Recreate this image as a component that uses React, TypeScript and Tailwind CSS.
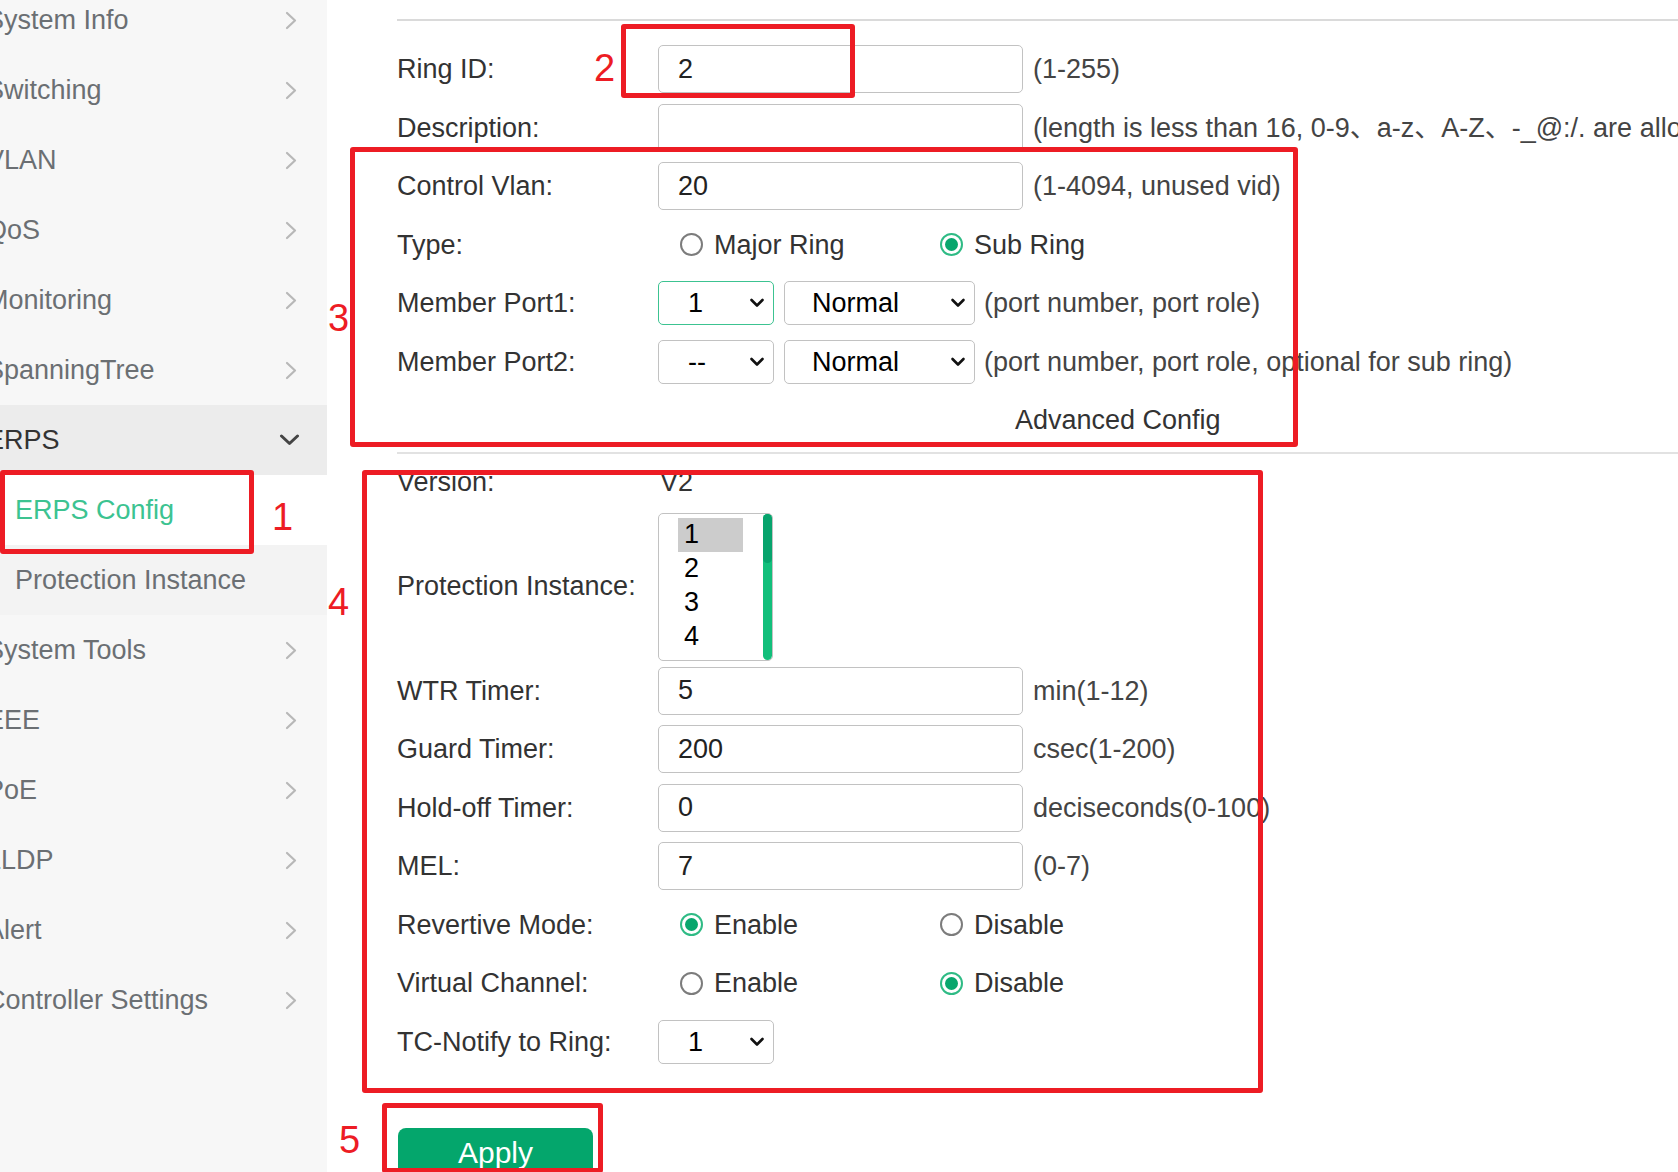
import type { ReactNode } from 'react';

const menu = [
  { label: 'System Info' },
  { label: 'Switching' },
  { label: 'VLAN' },
  { label: 'QoS' },
  { label: 'Monitoring' },
  { label: 'SpanningTree' },
  { label: 'ERPS', open: true },
  { label: 'ERPS Config', sub: true, active: true },
  { label: 'Protection Instance', sub: true },
  { label: 'System Tools' },
  { label: 'EEE' },
  { label: 'PoE' },
  { label: 'LLDP' },
  { label: 'Alert' },
  { label: 'Controller Settings' },
];

function ChevronRight() {
  return (
    <svg width="12" height="19" viewBox="0 0 12 19" fill="none">
      <path d="M2 2 L10 9.5 L2 17" stroke="#b8b8b8" strokeWidth="2.2" strokeLinecap="round" strokeLinejoin="round" />
    </svg>
  );
}

function ChevronDown({ small }: { small?: boolean }) {
  if (small) {
    return (
      <svg width="16" height="10" viewBox="0 0 16 10" fill="none">
        <path d="M2.5 2 L8 7.5 L13.5 2" stroke="#111" strokeWidth="2.6" strokeLinecap="round" strokeLinejoin="round" />
      </svg>
    );
  }
  return (
    <svg width="21" height="12" viewBox="0 0 21 12" fill="none">
      <path d="M2.5 2 L10.5 9.5 L18.5 2" stroke="#444" strokeWidth="3" strokeLinecap="round" strokeLinejoin="round" />
    </svg>
  );
}

function Sidebar() {
  return (
    <aside className="w-[327px] shrink-0 h-full bg-[#f7f7f7] overflow-hidden">
      <ul className="-mt-[15px]">
        {menu.map((item) => {
          let rowBg = '';
          if (item.open) rowBg = 'bg-[#ececec]';
          if (item.active) rowBg = 'bg-white';
          if (item.sub && !item.active) rowBg = 'bg-[#f3f3f3]';
          let color = 'text-[#6b6f73]';
          if (item.open) color = 'text-[#333]';
          if (item.active) color = 'text-[#3cc391]';
          return (
            <li key={item.label} className={`h-[70px] flex items-center justify-between whitespace-nowrap ${rowBg}`}>
              <span className={`${item.sub ? 'ml-[15px]' : '-ml-[14px]'} ${color}`}>{item.label}</span>
              {!item.sub && (
                <span className={item.open ? 'mr-[27px] flex' : 'mr-[30px] flex'}>
                  {item.open ? <ChevronDown /> : <ChevronRight />}
                </span>
              )}
            </li>
          );
        })}
      </ul>
    </aside>
  );
}

function Row({ label, children, tall }: { label: string; children?: ReactNode; tall?: boolean }) {
  return (
    <div className={`flex items-center whitespace-nowrap ${tall ? 'h-[150px]' : 'h-[58.5px]'}`}>
      <div className="w-[261px] shrink-0 text-[#333]">{label}</div>
      {children}
    </div>
  );
}

function TextBox({ value, hint }: { value: string; hint?: string }) {
  return (
    <>
      <input
        readOnly
        value={value}
        className="w-[365px] h-[48px] shrink-0 border-[1.5px] border-[#c2c2c2] rounded-[5px] pl-[19px] text-[#222] bg-white outline-none"
      />
      {hint && <span className="ml-[10px] text-[#444]">{hint}</span>}
    </>
  );
}

function Select({ value, width, focus }: { value: string; width: 'narrow' | 'wide'; focus?: boolean }) {
  return (
    <div
      className={`h-[44px] shrink-0 flex items-center justify-between border-[1.5px] rounded-[5px] pr-[8px] text-black ${
        width === 'narrow' ? 'w-[116px] pl-[29px]' : 'w-[191px] pl-[27px]'
      } ${focus ? 'border-[#3cc391]' : 'border-[#c2c2c2]'}`}
    >
      <span>{value}</span>
      <ChevronDown small />
    </div>
  );
}

function Radio({ label, checked, first }: { label: string; checked?: boolean; first?: boolean }) {
  return (
    <label className={`flex items-center gap-[11px] ${first ? 'ml-[22px] w-[260px]' : ''}`}>
      <span
        className={`w-[23px] h-[23px] rounded-full border-2 bg-white flex items-center justify-center ${
          checked ? 'border-[#2fbb85]' : 'border-[#7c7c7c]'
        }`}
      >
        {checked && <span className="w-[13px] h-[13px] rounded-full bg-[#08a66d]" />}
      </span>
      <span className="text-[#333]">{label}</span>
    </label>
  );
}

function InstanceList() {
  return (
    <div className="relative w-[115px] h-[148px] border-[1.5px] border-[#c2c2c2] rounded-[5px] pl-[19px] pt-[4px] text-black">
      {['1', '2', '3', '4'].map((n, i) => (
        <div key={n} className={`h-[34px] w-[65px] pl-[6px] flex items-center ${i === 0 ? 'bg-[#cccccc]' : ''}`}>
          {n}
        </div>
      ))}
      <div className="absolute right-0 top-0 bottom-0 w-[9px] rounded-full bg-[#12bf7b]">
        <div className="h-[49px] rounded-full bg-[#07a46d]" />
      </div>
    </div>
  );
}

function Annotations() {
  const box = 'absolute border-[5px] border-[#ed1c24] rounded-[3px]';
  const num = 'absolute text-[38px] leading-none text-[#ed1c24]';
  return (
    <>
      <div className={`${box} left-0 top-[470px] w-[254px] h-[84px]`} />
      <span className={`${num} left-[272px] top-[498px]`}>1</span>
      <div className={`${box} left-[621px] top-[24px] w-[234px] h-[74px]`} />
      <span className={`${num} left-[594px] top-[49px]`}>2</span>
      <div className={`${box} left-[350px] top-[147px] w-[948px] h-[300px]`} />
      <span className={`${num} left-[328px] top-[299px]`}>3</span>
      <div className={`${box} left-[362px] top-[470px] w-[901px] h-[623px]`} />
      <span className={`${num} left-[328px] top-[583px]`}>4</span>
      <div className={`${box} left-[382px] top-[1103px] w-[221px] h-[70px]`} />
      <span className={`${num} left-[339px] top-[1121px]`}>5</span>
    </>
  );
}

export default function App() {
  return (
    <div className="relative w-[1678px] h-[1172px] overflow-hidden flex bg-white text-[27px] font-['Liberation_Sans','Noto_Sans_CJK_SC',sans-serif]">
      <Sidebar />
      <main className="flex-1 min-w-0 pl-[70px] pt-[19px]">
        <div className="h-[2px] bg-[#dadada]" />
        <div className="mt-[19px]">
          <Row label="Ring ID:">
            <TextBox value="2" hint="(1-255)" />
          </Row>
          <Row label="Description:">
            <TextBox value="" hint="(length is less than 16, 0-9、a-z、A-Z、-_@:/. are allowed)" />
          </Row>
          <Row label="Control Vlan:">
            <TextBox value="20" hint="(1-4094, unused vid)" />
          </Row>
          <Row label="Type:">
            <Radio first label="Major Ring" />
            <Radio checked label="Sub Ring" />
          </Row>
          <Row label="Member Port1:">
            <Select value="1" width="narrow" focus />
            <span className="ml-[10px]">
              <Select value="Normal" width="wide" />
            </span>
            <span className="ml-[9px] text-[#444]">(port number, port role)</span>
          </Row>
          <Row label="Member Port2:">
            <Select value="--" width="narrow" />
            <span className="ml-[10px]">
              <Select value="Normal" width="wide" />
            </span>
            <span className="ml-[9px] text-[#444]">(port number, port role, optional for sub ring)</span>
          </Row>
          <div className="h-[58.5px] flex items-center pl-[618px] text-[#333]">Advanced Config</div>
        </div>
        <div className="mt-[2px] h-[2px] bg-[#e2e2e2]" />
        <div className="h-[58px] flex items-center whitespace-nowrap">
          <div className="w-[263px] shrink-0 text-[#333]">Version:</div>
          <span className="text-[#333]">V2</span>
        </div>
        <Row label="Protection Instance:" tall>
          <InstanceList />
        </Row>
        <Row label="WTR Timer:">
          <TextBox value="5" hint="min(1-12)" />
        </Row>
        <Row label="Guard Timer:">
          <TextBox value="200" hint="csec(1-200)" />
        </Row>
        <Row label="Hold-off Timer:">
          <TextBox value="0" hint="deciseconds(0-100)" />
        </Row>
        <Row label="MEL:">
          <TextBox value="7" hint="(0-7)" />
        </Row>
        <Row label="Revertive Mode:">
          <Radio first checked label="Enable" />
          <Radio label="Disable" />
        </Row>
        <Row label="Virtual Channel:">
          <Radio first label="Enable" />
          <Radio checked label="Disable" />
        </Row>
        <Row label="TC-Notify to Ring:">
          <Select value="1" width="narrow" />
        </Row>
        <button className="mt-[57px] ml-[1px] w-[195px] h-[48px] rounded-[8px] bg-[#04a66c] text-white text-[30px]">
          Apply
        </button>
      </main>
      <Annotations />
    </div>
  );
}
